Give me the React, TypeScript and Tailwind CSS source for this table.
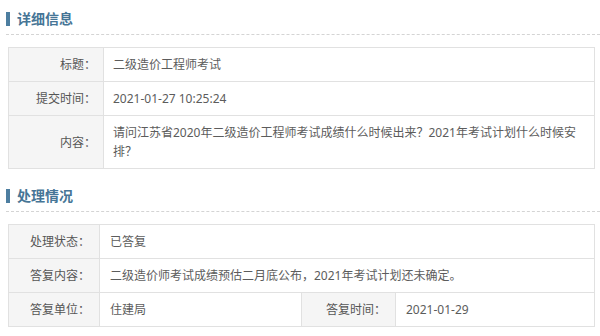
const rows1 = [
  { label: '标题：', value: '二级造价工程师考试' },
  { label: '提交时间：', value: '2021-01-27 10:25:24' },
  {
    label: '内容：',
    value: '请问江苏省2020年二级造价工程师考试成绩什么时候出来？2021年考试计划什么时候安排？',
  },
]

function SectionTitle({ title, className = '' }: { title: string; className?: string }) {
  return (
    <div className={`flex items-center gap-[7px] border-b border-dashed border-[#d4d4d4] pb-[7px] pt-[10px] ${className}`}>
      <span className="h-[14px] w-[4px] bg-[#4d7ea0]" />
      <h2 className="text-[14px] leading-[17px] font-bold text-[#467596]">{title}</h2>
    </div>
  )
}

const labelCell = 'border border-[#e1e1e1] bg-[#f5f5f5] py-[7px] pr-[7px] text-right align-middle text-[#555]'
const valueCell = 'border border-[#e1e1e1] bg-white py-[7px] pl-[9px] pr-[14px] text-left align-middle text-[#5c5c5c]'

export default function App() {
  return (
    <div className="h-[336px] w-[600px] overflow-hidden bg-white pl-[6px] font-['Noto_Sans','Noto_Sans_CJK_SC',sans-serif] text-[12px] leading-[19px]">
      <SectionTitle title="详细信息" />

      <table className="mt-[12px] ml-[2px] w-[587px] table-fixed border-collapse">
        <colgroup>
          <col className="w-[95px]" />
          <col />
        </colgroup>
        <tbody>
          {rows1.map((r) => (
            <tr key={r.label}>
              <td className={labelCell}>{r.label}</td>
              <td className={valueCell}>{r.value}</td>
            </tr>
          ))}
        </tbody>
      </table>

      <SectionTitle title="处理情况" className="mt-[8px]" />

      <table className="mt-[12px] ml-[2px] w-[587px] table-fixed border-collapse">
        <colgroup>
          <col className="w-[91px]" />
          <col className="w-[202px]" />
          <col className="w-[94px]" />
          <col />
        </colgroup>
        <tbody>
          <tr>
            <td className={labelCell + ' pr-[9px]'}>处理状态：</td>
            <td className={valueCell + ' pl-[10px]'} colSpan={3}>
              已答复
            </td>
          </tr>
          <tr>
            <td className={labelCell + ' pr-[9px]'}>答复内容：</td>
            <td className={valueCell + ' pl-[10px]'} colSpan={3}>
              二级造价师考试成绩预估二月底公布，2021年考试计划还未确定。
            </td>
          </tr>
          <tr>
            <td className={labelCell + ' pr-[9px]'}>答复单位：</td>
            <td className={valueCell + ' pl-[10px]'}>住建局</td>
            <td className={labelCell + ' pr-[9px]'}>答复时间：</td>
            <td className={valueCell + ' pl-[10px]'}>2021-01-29</td>
          </tr>
        </tbody>
      </table>
    </div>
  )
}
